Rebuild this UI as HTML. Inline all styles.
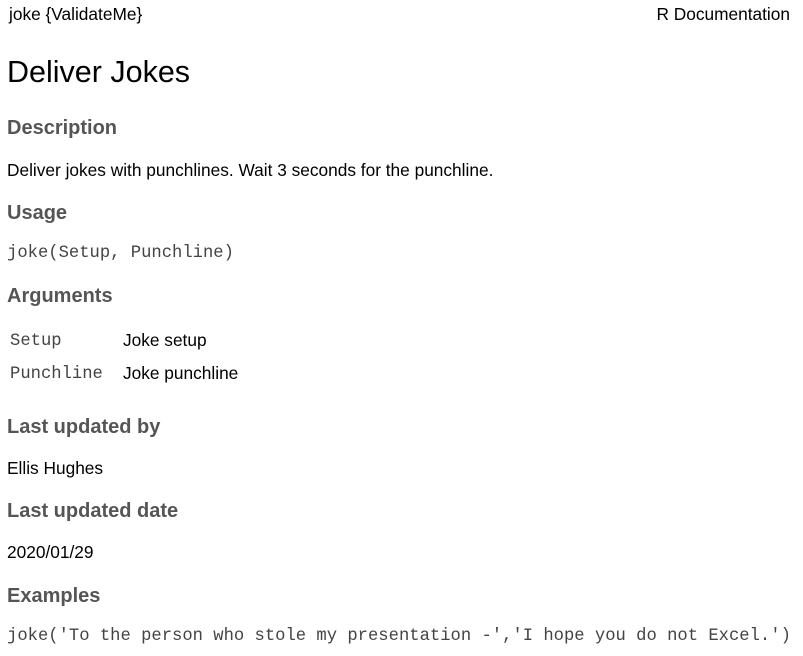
<!DOCTYPE html>
<html><head><meta charset="utf-8"><style>
body{margin:0;width:803px;height:656px;background:#fff;font-family:"Liberation Sans",Arial,sans-serif;color:#000;position:relative;overflow:hidden}
.a{position:absolute;white-space:nowrap;line-height:1}
.t{font-size:17.3px}
.h{font-size:20px;font-weight:bold;color:#555}
.m{font-family:"Liberation Mono","Courier New",monospace;font-size:17.2px;color:#444}
.ms{font-family:"Liberation Mono","Courier New",monospace;font-size:17.2px;color:#444}
</style></head><body>
<div class="a t" style="left:9px;top:6px">joke {ValidateMe}</div>
<div class="a t" style="right:13px;top:6px">R Documentation</div>
<div class="a" style="left:7px;top:57px;font-size:30.5px">Deliver Jokes</div>
<div class="a h" style="left:7px;top:118px">Description</div>
<div class="a t" style="left:7px;top:162px">Deliver jokes with punchlines. Wait 3 seconds for the punchline.</div>
<div class="a h" style="left:7px;top:203px">Usage</div>
<div class="a m" style="left:7px;top:245px">joke(Setup, Punchline)</div>
<div class="a h" style="left:7px;top:286px">Arguments</div>
<div class="a ms" style="left:10px;top:333px">Setup</div>
<div class="a t" style="left:123px;top:332px">Joke setup</div>
<div class="a ms" style="left:10px;top:366px">Punchline</div>
<div class="a t" style="left:123px;top:365px">Joke punchline</div>
<div class="a h" style="left:7px;top:417px">Last updated by</div>
<div class="a t" style="left:7px;top:460px">Ellis Hughes</div>
<div class="a h" style="left:7px;top:501px">Last updated date</div>
<div class="a t" style="left:7px;top:544px">2020/01/29</div>
<div class="a h" style="left:7px;top:586px">Examples</div>
<div class="a m" style="left:7px;top:628px">joke('To the person who stole my presentation -','I hope you do not Excel.')</div>
</body></html>
